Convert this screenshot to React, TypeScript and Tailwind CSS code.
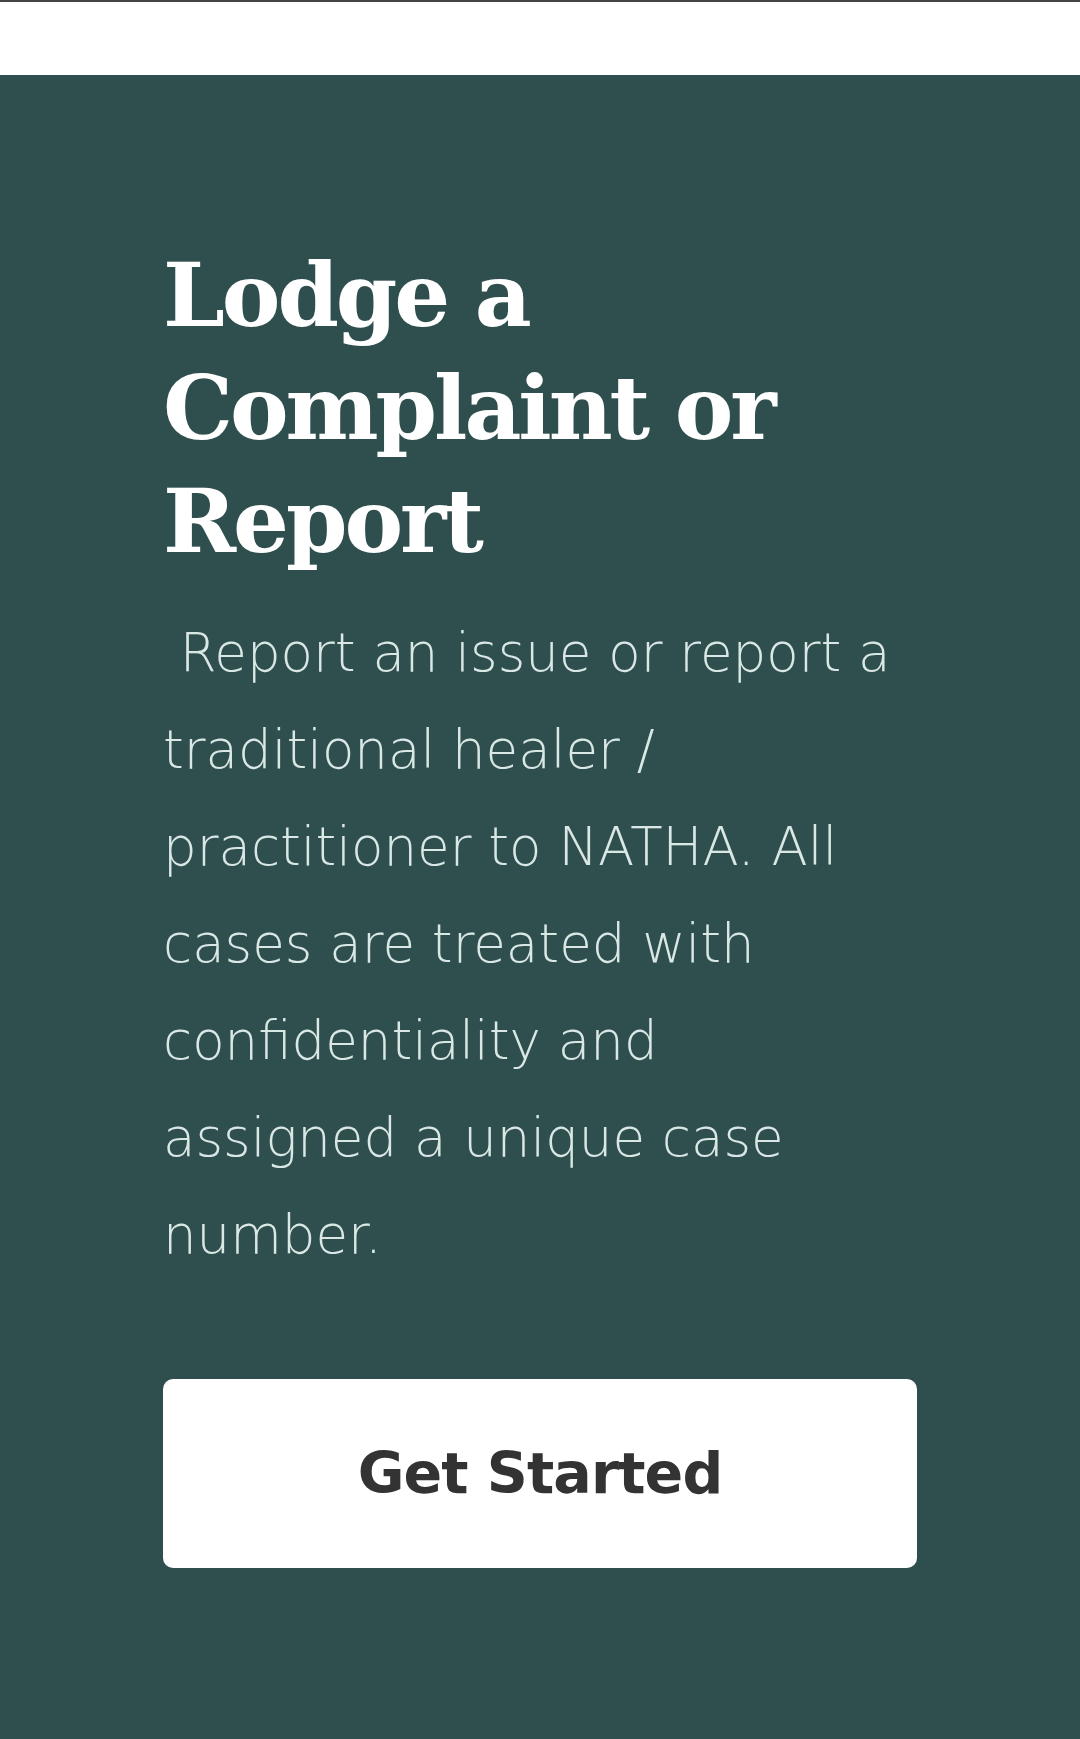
export default function App() {
  return (
    <div className="min-h-screen flex flex-col bg-white">
      {/* top rule + white header strip */}
      <div className="h-[2px] bg-[#444444]" />
      <div className="h-[73px] bg-white" />

      {/* complaint call-to-action */}
      <section className="flex-1 bg-[#2f4f4e] px-[163px] pt-[164px] pb-[171px]">
        <h1 className="font-['DejaVu_Serif',serif] font-bold text-white text-[88px] leading-[113px] tracking-[-0.035em]">
          Lodge a Complaint or Report
        </h1>

        <p className="mt-[26px] max-w-[735px] font-['DejaVu_Sans',sans-serif] font-extralight text-[#dae8e5] text-[53px] leading-[97px]">
          &nbsp;Report an issue or report a traditional healer / practitioner to NATHA. All cases are treated with
          confidentiality and assigned a unique case number.
        </p>

        <button className="mt-[96px] w-full h-[189px] rounded-[10px] bg-white flex items-center justify-center font-['DejaVu_Sans',sans-serif] font-bold text-[57px] tracking-[-0.015em] text-[#333333]">
          Get Started
        </button>
      </section>
    </div>
  );
}
